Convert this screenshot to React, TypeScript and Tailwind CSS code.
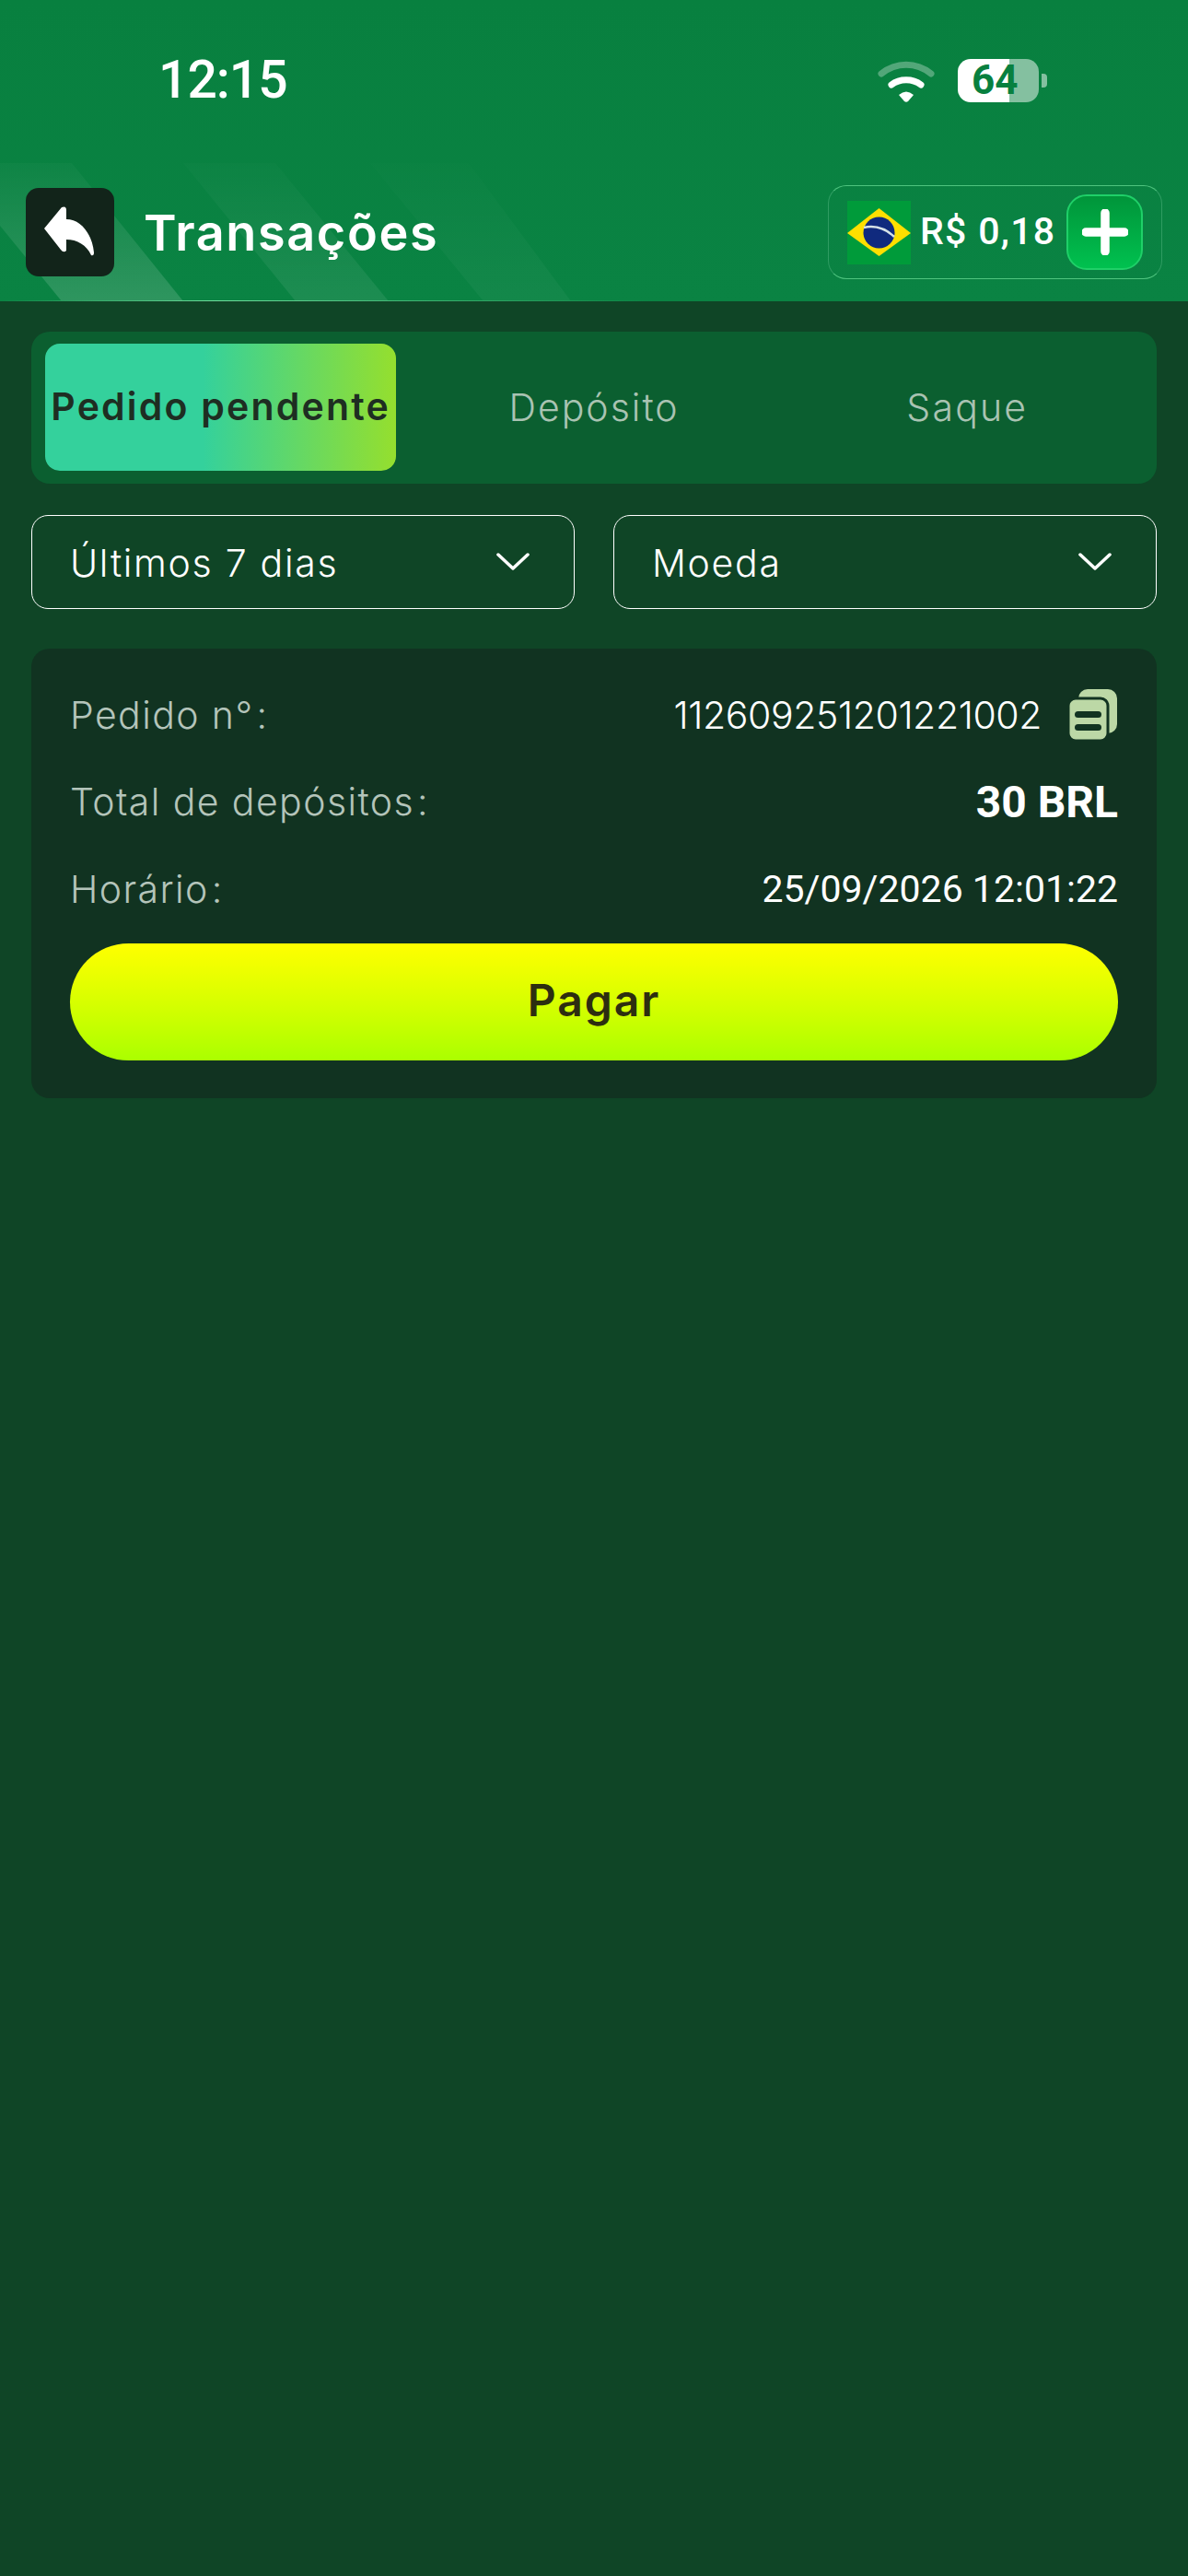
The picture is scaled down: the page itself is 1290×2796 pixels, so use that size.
const inter = "font-['Inter','Liberation_Sans',sans-serif]";
const roboto = "font-['Roboto','Liberation_Sans',sans-serif]";

function BackIcon() {
  return (
    <svg viewBox="0 0 96 96" className="w-[96px] h-[96px]">
      <path
        d="M20 44 L39 21 Q44 19 44 24 L44 34 C60 34 72 50 74 70 Q74 74 71 73 C66 62 56 56 44 56 L44 68 Q41 71 38 67 Z"
        fill="#fff"
      />
    </svg>
  );
}

function Wifi() {
  return (
    <svg viewBox="0 0 62 46" className="w-[62px] h-[46px]" fill="none" strokeLinecap="round">
      <path d="M4 15 C20 2 42 2 58 15" stroke="#fff" strokeOpacity="0.3" strokeWidth="7" />
      <path d="M15 27 C24 20 38 20 47 27" stroke="#fff" strokeWidth="7" />
      <path d="M23 38 Q31 31 39 38 L33 45 Q31 46.5 29 45 Z" fill="#fff" />
    </svg>
  );
}

function Battery() {
  return (
    <div className="flex items-center gap-[3px]">
      <div className="relative flex w-[88px] h-[47px]">
        <div className="w-[56px] rounded-l-[14px] bg-white" />
        <div className="w-[32px] rounded-r-[14px] bg-white/50" />
        <span className={`absolute left-[15px] top-0 leading-[47px] text-[44px] font-bold text-[#08803f] ${roboto}`}>64</span>
      </div>
      <div className="w-[6px] h-[15px] rounded-r-[4px] bg-white/50" />
    </div>
  );
}

function Flag() {
  return (
    <svg viewBox="0 0 69 69" className="w-[69px] h-[69px] shrink-0">
      <rect width="69" height="69" fill="#009b3a" />
      <path d="M0 35 L34.5 8 L69 35 L34.5 60 Z" fill="#fedf00" />
      <circle cx="34.5" cy="34.5" r="17" fill="#102a7e" />
      <path d="M18 29 Q36 25 51 39" stroke="#d6e2e8" strokeWidth="2.5" fill="none" />
    </svg>
  );
}

function PlusButton() {
  return (
    <div className="w-[83px] h-[82px] shrink-0 rounded-[22px] bg-gradient-to-b from-[#00953a] to-[#00c14f] border-2 border-[#1fd068] flex items-center justify-center">
      <svg viewBox="0 0 50 50" className="w-[50px] h-[50px]">
        <path d="M25 4 V46 M4 25 H46" stroke="#fff" strokeWidth="9.5" strokeLinecap="round" />
      </svg>
    </div>
  );
}

function Chevron() {
  return (
    <svg viewBox="0 0 36 20" className="w-[36px] h-[20px]" fill="none">
      <path d="M2 2 L18 17 L34 2" stroke="#fff" strokeWidth="3.5" strokeLinecap="round" strokeLinejoin="round" />
    </svg>
  );
}

function CopyIcon() {
  return (
    <svg viewBox="0 0 53 56" className="w-[53px] h-[56px] shrink-0 mr-[1px]">
      <rect x="11" y="0" width="42" height="48" rx="10" fill="#bcd8a6" />
      <rect x="0" y="10" width="43" height="46" rx="8" fill="#bcd8a6" stroke="#113321" strokeWidth="3" />
      <rect x="7" y="24" width="29" height="7" rx="3.5" fill="#113321" />
      <rect x="7" y="38" width="29" height="7" rx="3.5" fill="#113321" />
    </svg>
  );
}

function Dropdown({ label }: { label: string }) {
  return (
    <div className="flex-1 h-[102px] border border-white rounded-[18px] pl-[41px] pr-[48px] flex items-center justify-between">
      <span className={`pt-[4px] text-[41px] font-light tracking-[1.7px] text-white ${inter}`}>{label}</span>
      <Chevron />
    </div>
  );
}

function Row({ label, children }: { label: string; children: React.ReactNode }) {
  return (
    <div className="h-[94.5px] flex items-center justify-between">
      <span className={`text-[41px] font-light tracking-[1.4px] text-[#b4c4ba] ${inter}`}>
        {label}
        <span className="ml-[3px]">:</span>
      </span>
      {children}
    </div>
  );
}

export default function App() {
  return (
    <div className="w-[1290px] h-[2796px] bg-[#0f4526]">
      <header className="relative h-[327px] bg-gradient-to-b from-[#08803f] to-[#0a8343] overflow-hidden">
        <svg viewBox="0 0 700 152" className="absolute left-0 bottom-0 w-[700px] h-[152px]">
          <defs>
            <linearGradient id="stripe" x1="0" y1="1" x2="0" y2="0">
              <stop offset="0" stopColor="#fff" stopOpacity="1" />
              <stop offset="1" stopColor="#fff" stopOpacity="0.15" />
            </linearGradient>
          </defs>
          <path d="M0 2 L78 2 L199 152 L67 152 L0 70 Z" fill="url(#stripe)" fillOpacity="0.15" />
          <path d="M199 2 L299 2 L422 152 L321 152 Z" fill="url(#stripe)" fillOpacity="0.08" />
          <path d="M402 2 L509 2 L620 152 L525 152 Z" fill="url(#stripe)" fillOpacity="0.04" />
        </svg>
        <div className="relative h-[175px] pt-[64px] pl-[172px] pr-[153px] flex items-start justify-between">
          <span className={`text-[57px] leading-[46px] font-medium tracking-[-1px] text-white ${roboto}`}>12:15</span>
          <div className="flex items-center gap-[25px]">
            <Wifi />
            <Battery />
          </div>
        </div>
        <div className="relative h-[152px] px-[28px] pt-[2px] flex items-center">
          <div className="w-[96px] h-[96px] rounded-[14px] bg-[#12241a]">
            <BackIcon />
          </div>
          <span className={`ml-[32px] text-[54px] font-semibold tracking-[1.6px] text-white ${inter}`}>Transações</span>
          <div className="ml-auto w-[363px] h-[102px] rounded-[20px] border border-[#4fc47f] border-x-[#2f9c62] pl-[20px] pr-[20px] flex items-center">
            <Flag />
            <span className={`ml-[10px] text-[41px] font-medium tracking-[1.3px] text-white whitespace-nowrap ${roboto}`}>R$ 0,18</span>
            <div className="ml-auto">
              <PlusButton />
            </div>
          </div>
        </div>
        <div className="absolute left-0 right-0 bottom-0 h-[1px] bg-[linear-gradient(90deg,#0a8343_0%,#6fdc9c_18%,#0a8343_55%)]" />
      </header>

      <main className="px-[34px] pt-[33px]">
        <div className="h-[165px] rounded-[20px] bg-[#0b5f30] px-[15px] pt-[13px] pb-[14px] grid grid-cols-3 gap-[24px]">
          <div className={`rounded-[16px] bg-[linear-gradient(90deg,#34d19c_0%,#34d19c_45%,#95df2e_100%)] flex items-center justify-center text-[41px] font-semibold tracking-[2.2px] text-[#1e2e22] whitespace-nowrap ${inter}`}>
            Pedido pendente
          </div>
          <div className={`pt-[2px] flex items-center justify-center text-[41px] font-light tracking-[2px] text-[#a9c3b2] ${inter}`}>Depósito</div>
          <div className={`pt-[2px] flex items-center justify-center text-[41px] font-light tracking-[2.2px] text-[#a9c3b2] ${inter}`}>Saque</div>
        </div>

        <div className="mt-[34px] flex gap-[42px]">
          <Dropdown label="Últimos 7 dias" />
          <Dropdown label="Moeda" />
        </div>

        <div className="mt-[43px] rounded-[20px] bg-[#113321] px-[42px] pt-[25px] pb-[41px]">
          <Row label="Pedido n°">
            <div className="flex items-center gap-[29px]">
              <span className={`text-[41px] font-light tracking-[-0.4px] text-white ${inter}`}>112609251201221002</span>
              <CopyIcon />
            </div>
          </Row>
          <Row label="Total de depósitos">
            <span className={`text-[48px] font-bold text-white ${roboto}`}>30 BRL</span>
          </Row>
          <Row label="Horário">
            <span className={`text-[41px] text-white ${roboto}`}>25/09/2026 12:01:22</span>
          </Row>
          <div className={`mt-[11px] pb-[3px] h-[127px] rounded-full bg-gradient-to-b from-[#ffff00] to-[#aaff00] flex items-center justify-center text-[48px] font-semibold tracking-[2px] text-[#2d2e10] ${inter}`}>
            Pagar
          </div>
        </div>
      </main>
    </div>
  );
}
